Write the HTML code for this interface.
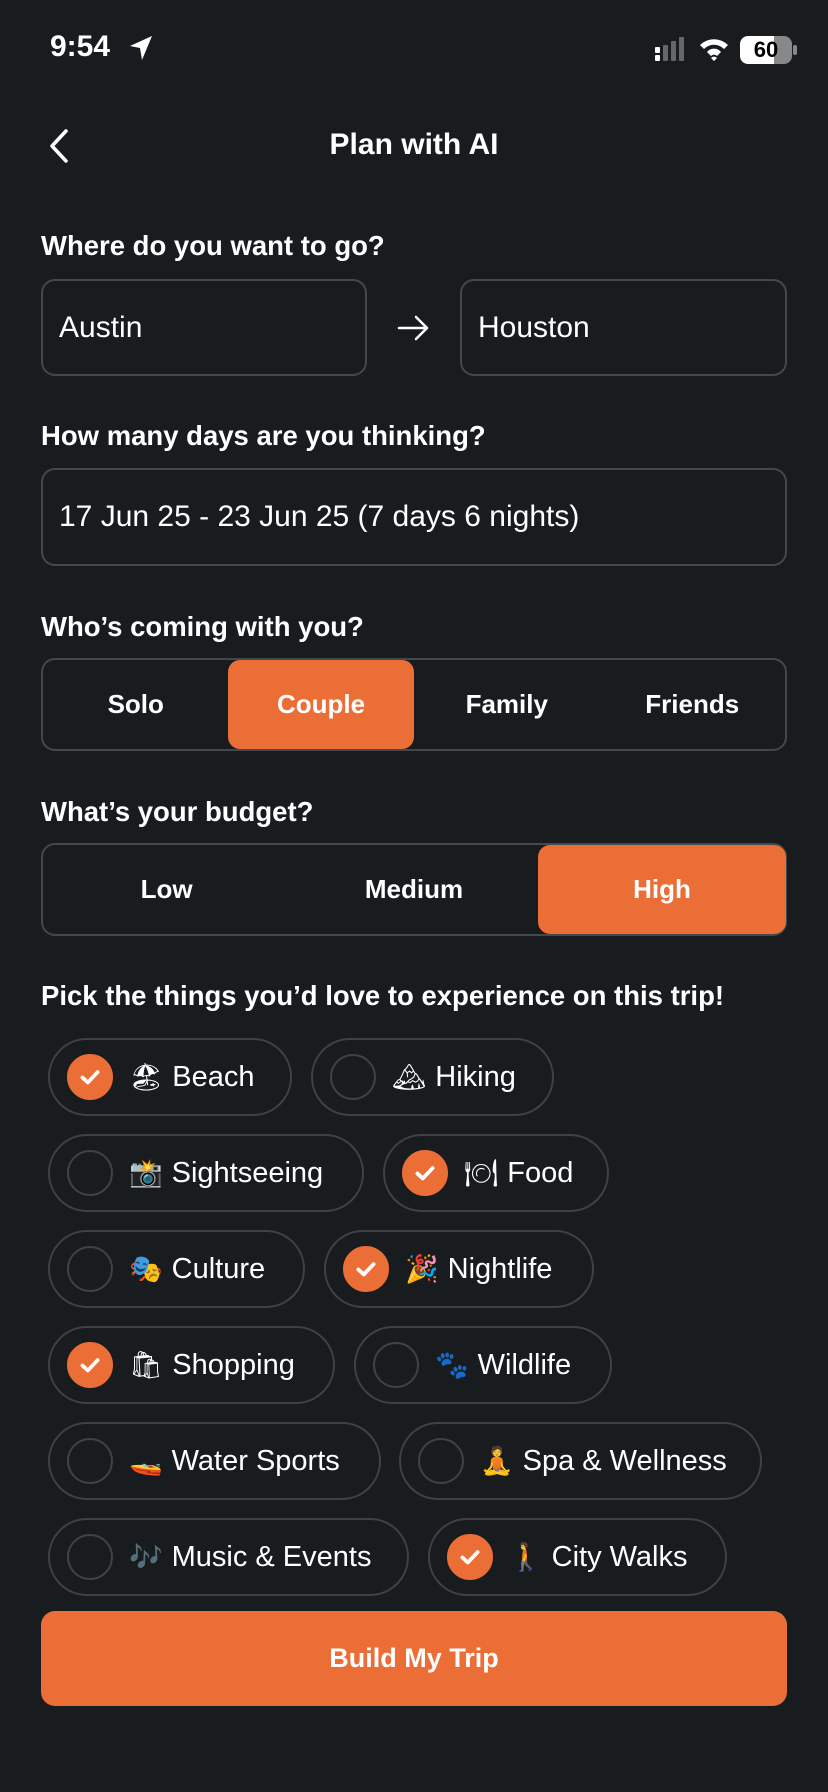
<!DOCTYPE html>
<html><head><meta charset="utf-8"><style>
*{box-sizing:border-box;margin:0;padding:0}
body{width:828px;height:1792px;background:#191c1f;color:#fff;font-family:"Liberation Sans","Noto Sans CJK SC",sans-serif;position:relative;overflow:hidden}
.a{position:absolute}
.lbl{position:absolute;left:41px;font-size:27.5px;font-weight:700;transform:translateY(-50%)}
.box{position:absolute;border:2px solid #44474b;border-radius:14px;display:flex;align-items:center;padding-left:16px;font-size:30px}
.seg{position:absolute;left:41px;width:746px;border:2px solid #44474b;border-radius:14px;display:flex;align-items:center;font-size:26px}
.seg div{flex:1;text-align:center}
.sel{position:absolute;background:#ec6e37;border-radius:12px;display:flex;align-items:center;justify-content:center;font-size:26px}
.chip{position:absolute;height:78px;border:2px solid #3e4145;border-radius:39px;display:flex;align-items:center;font-size:29px}
.c{width:46px;height:46px;border-radius:50%;border:2px solid #3e4145;margin-left:17px;margin-right:16px;display:flex;align-items:center;justify-content:center;flex-shrink:0}
.c.on{background:#ec6e37;border-color:#ec6e37}
.e{font-size:27px;margin-right:9px;font-family:"DejaVu Sans",sans-serif}
</style></head><body>
<div class="a" style="left:50px;top:30px;font-size:30px;font-weight:600">9:54</div>
<svg class="a" style="left:128px;top:34px" width="26" height="28" viewBox="0 0 26 28"><path d="M24 2 L2 12 L12 14 L14 26 Z" fill="#fff"/></svg>
<svg class="a" style="left:654px;top:37px" width="36" height="26"><g fill="#fff"><rect x="1" y="10" width="5" height="6" rx="1"/><rect x="1" y="18" width="5" height="6" rx="1"/></g><g fill="#666"><rect x="9" y="8" width="5" height="16" rx="1"/><rect x="17" y="4" width="5" height="20" rx="1"/><rect x="25" y="0" width="5" height="24" rx="1"/></g></svg>
<svg class="a" style="left:698px;top:36px" width="32" height="26" viewBox="0 0 32 26"><path d="M2 9 A20 20 0 0 1 30 9 L26 13 A14 14 0 0 0 6 13Z M9 16 A9 9 0 0 1 23 16 L19 20 A4 4 0 0 0 13 20Z M16 25 L13 22 A4 4 0 0 1 19 22Z" fill="#fff"/></svg>
<div class="a" style="left:740px;top:36px;width:52px;height:28px;border-radius:8px;background:linear-gradient(90deg,#fff 0 65%,#888 65%);color:#000;font-size:22px;font-weight:700;text-align:center;line-height:28px">60</div>
<div class="a" style="left:793px;top:45px;width:4px;height:10px;background:#888;border-radius:2px"></div>
<svg class="a" style="left:46px;top:128px" width="24" height="36"><path d="M20 3 L6 18 L20 33" stroke="#fff" stroke-width="3.5" fill="none" stroke-linecap="round" stroke-linejoin="round"/></svg>
<div class="a" style="left:0;width:828px;top:128px;text-align:center;font-size:30px;font-weight:600">Plan with AI</div>
<div class="lbl" style="top:246px">Where do you want to go?</div>
<div class="box" style="left:41px;top:279px;width:326px;height:97px">Austin</div>
<svg class="a" style="left:397px;top:314px" width="34" height="28"><path d="M2 14 H30 M19 3 L30 14 L19 25" stroke="#fff" stroke-width="2.5" fill="none" stroke-linecap="round" stroke-linejoin="round"/></svg>
<div class="box" style="left:460px;top:279px;width:327px;height:97px">Houston</div>
<div class="lbl" style="top:436px">How many days are you thinking?</div>
<div class="box" style="left:41px;top:468px;width:746px;height:98px">17 Jun 25 - 23 Jun 25 (7 days 6 nights)</div>
<div class="lbl" style="top:627px">Who’s coming with you?</div>
<div class="seg" style="top:658px;height:93px;font-weight:600"><div>Solo</div><div style="opacity:0">Couple</div><div>Family</div><div>Friends</div></div>
<div class="sel" style="left:228px;top:660px;width:186px;height:89px;font-weight:600">Couple</div>
<div class="lbl" style="top:812px">What’s your budget?</div>
<div class="seg" style="top:843px;height:93px;font-weight:600"><div>Low</div><div>Medium</div><div style="opacity:0">High</div></div>
<div class="sel" style="left:538px;top:845px;width:248px;height:89px;font-weight:600">High</div>
<div class="lbl" style="top:996px">Pick the things you’d love to experience on this trip!</div>
<svg width="0" height="0" style="position:absolute"><defs><symbol id="ck" viewBox="0 0 24 24"><path d="M5 12.5 L10 17 L19 7.5" stroke="#fff" stroke-width="3.5" fill="none" stroke-linecap="round" stroke-linejoin="round"/></symbol></defs></svg>
<div class="chip" style="left:48px;top:1038px;width:244px"><div class="c on"><svg width="26" height="26"><use href="#ck"/></svg></div><span class="e">🏖</span>Beach</div>
<div class="chip" style="left:311px;top:1038px;width:243px"><div class="c"></div><span class="e">🏔</span>Hiking</div>
<div class="chip" style="left:48px;top:1134px;width:316px"><div class="c"></div><span class="e">📸</span>Sightseeing</div>
<div class="chip" style="left:383px;top:1134px;width:226px"><div class="c on"><svg width="26" height="26"><use href="#ck"/></svg></div><span class="e">🍽</span>Food</div>
<div class="chip" style="left:48px;top:1230px;width:257px"><div class="c"></div><span class="e">🎭</span>Culture</div>
<div class="chip" style="left:324px;top:1230px;width:270px"><div class="c on"><svg width="26" height="26"><use href="#ck"/></svg></div><span class="e">🎉</span>Nightlife</div>
<div class="chip" style="left:48px;top:1326px;width:287px"><div class="c on"><svg width="26" height="26"><use href="#ck"/></svg></div><span class="e">🛍</span>Shopping</div>
<div class="chip" style="left:354px;top:1326px;width:258px"><div class="c"></div><span class="e">🐾</span>Wildlife</div>
<div class="chip" style="left:48px;top:1422px;width:333px"><div class="c"></div><span class="e">🚤</span>Water Sports</div>
<div class="chip" style="left:399px;top:1422px;width:363px"><div class="c"></div><span class="e">🧘</span>Spa &amp; Wellness</div>
<div class="chip" style="left:48px;top:1518px;width:361px"><div class="c"></div><span class="e">🎶</span>Music &amp; Events</div>
<div class="chip" style="left:428px;top:1518px;width:299px"><div class="c on"><svg width="26" height="26"><use href="#ck"/></svg></div><span class="e">🚶</span>City Walks</div>
<div class="a" style="left:41px;top:1611px;width:746px;height:95px;background:#ec6e37;border-radius:14px;display:flex;align-items:center;justify-content:center;font-size:27px;font-weight:600">Build My Trip</div>
</body></html>
